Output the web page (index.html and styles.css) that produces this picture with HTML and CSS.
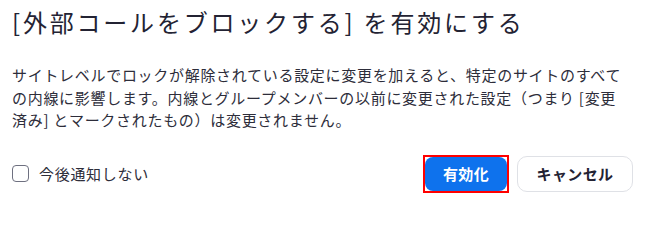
FILE: index.html
```html
<!DOCTYPE html>
<html lang="ja">
<head>
<meta charset="utf-8">
<title>外部コールをブロックする</title>
<link rel="stylesheet" href="styles.css">
</head>
<body>
<div class="dialog">
  <h1 class="title">[外部コールをブロックする] を有効にする</h1>
  <p class="message">サイトレベルでロックが解除されている設定に変更を加えると、特定のサイトのすべての内線に影響します。内線とグループメンバーの以前に変更された設定（つまり [変更済み] とマークされたもの）は変更されません。</p>
  <div class="footer">
    <label class="check">
      <span class="box"></span>
      <span class="check-label">今後通知しない</span>
    </label>
    <div class="actions">
      <span class="focus-ring"><button class="btn btn-primary" type="button">有効化</button></span>
      <button class="btn btn-secondary" type="button">キャンセル</button>
    </div>
  </div>
</div>
</body>
</html>
```

FILE: styles.css
```css
html, body {
  margin: 0;
  padding: 0;
  background: #ffffff;
}
body {
  font-family: "Noto Sans CJK JP", "Noto Sans", sans-serif;
  color: #232333;
}
.dialog {
  width: 648px;
  height: 209px;
  box-sizing: border-box;
  padding: 4px 12px 0 12px;
}
.title {
  margin: 0;
  font-size: 24px;
  line-height: 36px;
  font-weight: 400;
  letter-spacing: 2.8px;
  color: #232333;
  white-space: nowrap;
}
.message {
  margin: 24px 0 0 0;
  width: 615px;
  font-size: 15px;
  line-height: 22.5px;
  letter-spacing: 0.7px;
  color: #2d2d3a;
}
.footer {
  display: flex;
  align-items: center;
  justify-content: space-between;
  margin-top: 23px;
  padding-right: 3px;
  height: 38px;
}
.check {
  display: flex;
  align-items: center;
  gap: 10px;
}
.box {
  width: 17px;
  height: 17px;
  box-sizing: border-box;
  border: 1.5px solid #6e7080;
  border-radius: 4px;
}
.check-label {
  font-size: 15px;
  letter-spacing: 0.7px;
  color: #2d2d3a;
}
.actions {
  display: flex;
  align-items: center;
  gap: 8px;
}
.focus-ring {
  display: flex;
  border: 2px solid #ff0000;
}
.btn {
  font-family: "Noto Sans CJK JP", "Noto Sans", sans-serif;
  font-size: 15px;
  font-weight: 700;
  letter-spacing: 0.4px;
  box-sizing: border-box;
  padding: 0;
  cursor: pointer;
}
.btn-primary {
  width: 82px;
  height: 34px;
  background: #0e72ed;
  color: #ffffff;
  border: none;
  border-radius: 8px;
}
.btn-secondary {
  width: 116px;
  height: 36px;
  background: #ffffff;
  color: #232333;
  border: 1px solid #dfe1e6;
  border-radius: 10px;
}
```
